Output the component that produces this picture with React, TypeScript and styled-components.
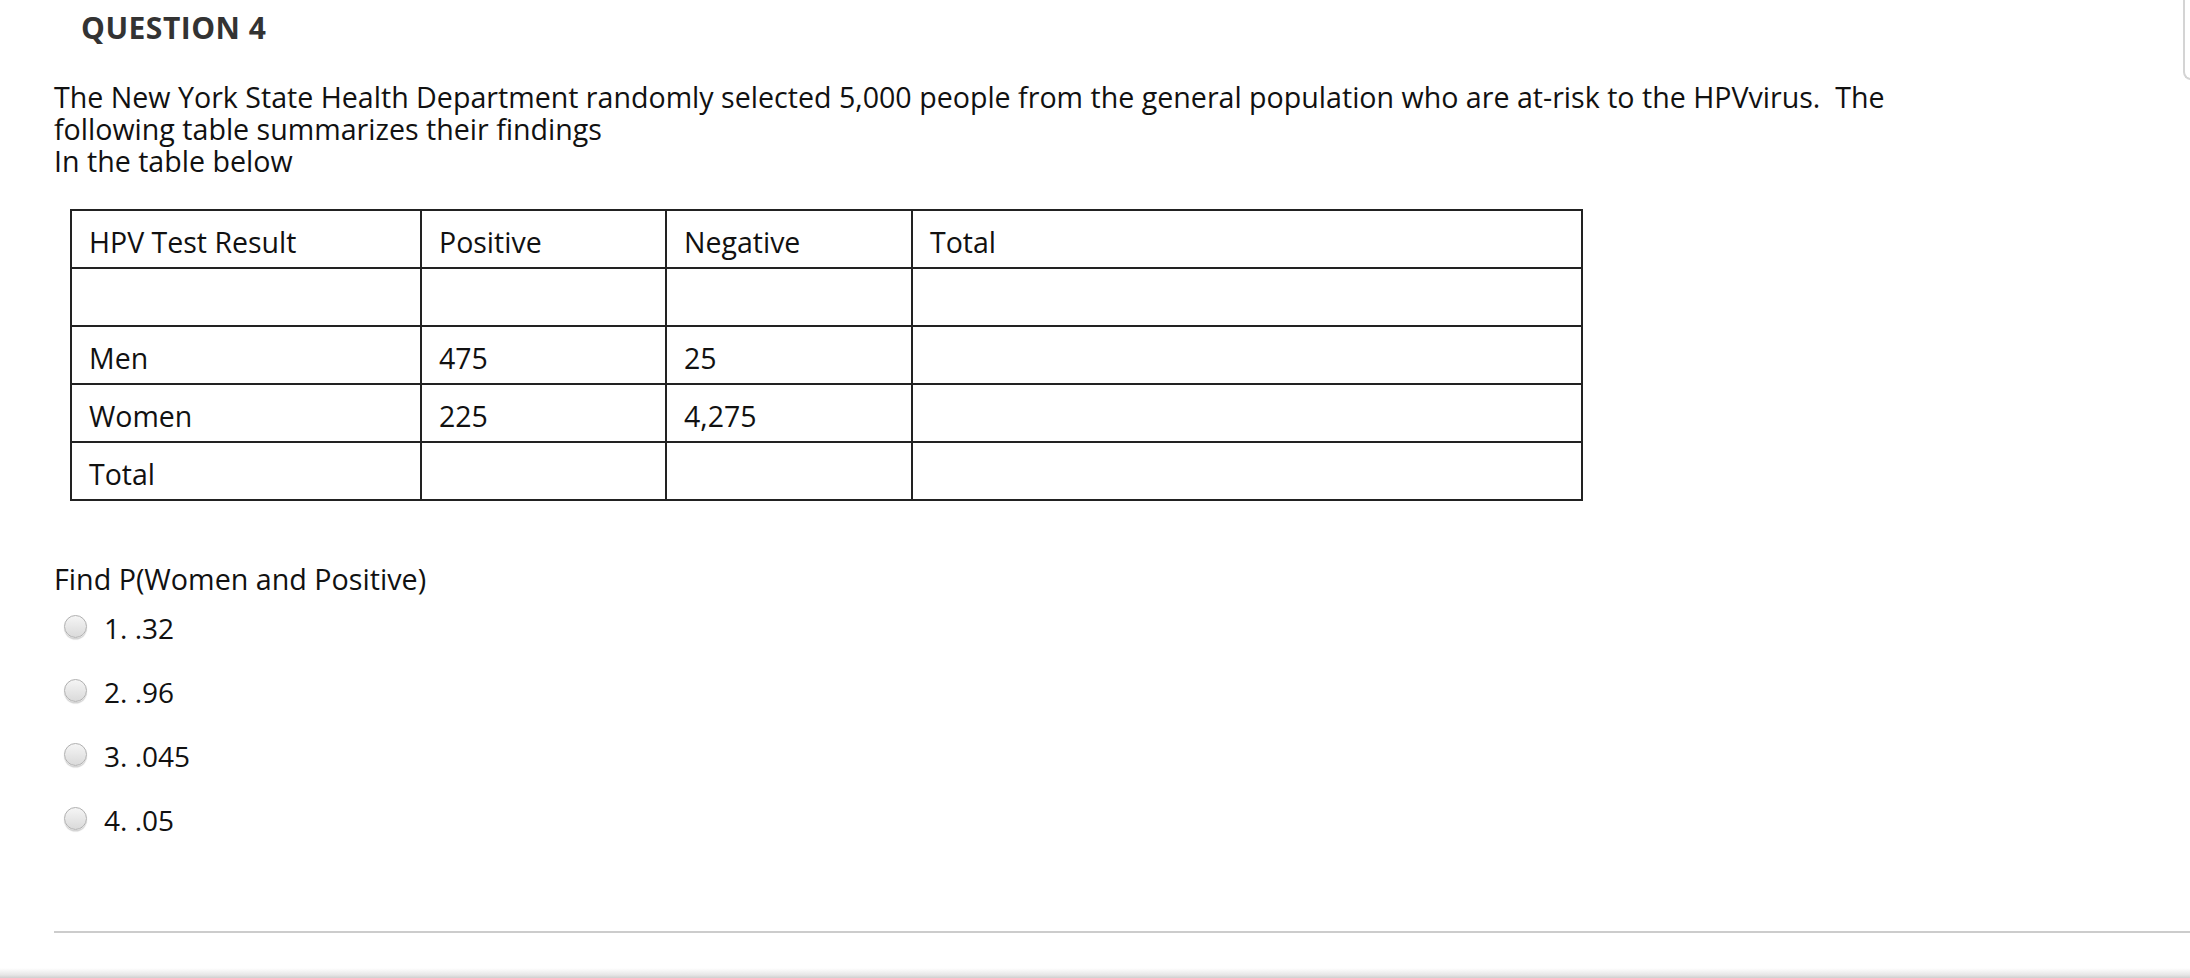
import React from "react";
import styled, { createGlobalStyle } from "styled-components";

const Global = createGlobalStyle`
  html, body { margin: 0; padding: 0; background: #fff; }
  body { font-family: "Open Sans", "Liberation Sans", sans-serif; color: #111; }
`;

const Page = styled.div`
  width: 2190px;
  height: 978px;
  position: relative;
  overflow: hidden;
  display: flex;
  flex-direction: column;
`;

const Header = styled.div`
  display: flex;
  justify-content: space-between;
  align-items: flex-start;
  height: 55px;
`;

const Title = styled.h2`
  margin: 0;
  padding: 9px 0 0 81px;
  font-size: 30px;
  line-height: 38px;
  letter-spacing: 0.5px;
  font-weight: 700;
  color: #333;
`;

const PointsBox = styled.div`
  width: 8px;
  height: 80px;
  border-left: 2px solid #d4d4d4;
  border-bottom: 2px solid #d4d4d4;
  border-bottom-left-radius: 8px;
  box-sizing: border-box;
  margin-right: -1px;
`;

const Content = styled.div`
  padding-left: 54px;
  display: flex;
  flex-direction: column;
`;

const Paragraph = styled.div`
  font-size: 28.6px;
  line-height: 32px;
  color: #111;
  padding-top: 26px;
`;

const Line = styled.div`
  white-space: pre;
`;

const Table = styled.table`
  margin: 32px 0 0 16px;
  width: 1511px;
  border-collapse: collapse;
  table-layout: fixed;
  font-size: 28.5px;
  color: #111;
`;

const Cell = styled.td`
  border: 2px solid #222;
  height: 58px;
  padding: 6px 0 0 17px;
  box-sizing: border-box;
  vertical-align: middle;
  white-space: nowrap;
`;

const Prompt = styled.div`
  font-size: 28.7px;
  line-height: 32px;
  margin-top: 62px;
`;

const Options = styled.div`
  display: flex;
  flex-direction: column;
  gap: 26px;
  margin-top: 14px;
  padding-left: 10px;
`;

const Option = styled.label`
  display: flex;
  align-items: center;
  gap: 17px;
  font-size: 28px;
  line-height: 38px;
`;

const Radio = styled.span`
  width: 23px;
  height: 23px;
  border-radius: 50%;
  box-sizing: border-box;
  border: 1.5px solid #b0b0b0;
  background: linear-gradient(#f5f5f5, #dadada);
  box-shadow: 0 1.5px 1px rgba(0, 0, 0, 0.18);
  flex-shrink: 0;
  margin-top: -3px;
`;

const Divider = styled.div`
  margin: auto 0 0 54px;
  border-top: 2px solid #cccccc;
`;

const BottomShade = styled.div`
  margin-top: 35px;
  height: 10px;
  background: linear-gradient(#ffffff, #e6e6e6 70%, #cfcfcf);
`;

const rows = [
  ["HPV Test Result", "Positive", "Negative", "Total"],
  ["", "", "", ""],
  ["Men", "475", "25", ""],
  ["Women", "225", "4,275", ""],
  ["Total", "", "", ""],
];

const options = ["1. .32", "2. .96", "3. .045", "4. .05"];

export default function App() {
  return (
    <>
      <Global />
      <Page>
        <Header>
          <Title>QUESTION 4</Title>
          <PointsBox />
        </Header>
        <Content>
          <Paragraph>
            <Line>
              The New York State Health Department randomly selected 5,000 people from the general population who are at-risk to the HPVvirus.{"  "}The
            </Line>
            <Line>following table summarizes their findings</Line>
            <Line>In the table below</Line>
          </Paragraph>
          <Table>
            <colgroup>
              <col style={{ width: 350 }} />
              <col style={{ width: 245 }} />
              <col style={{ width: 246 }} />
              <col style={{ width: 670 }} />
            </colgroup>
            <tbody>
              {rows.map((r, i) => (
                <tr key={i}>
                  {r.map((c, j) => (
                    <Cell key={j}>{c}</Cell>
                  ))}
                </tr>
              ))}
            </tbody>
          </Table>
          <Prompt>Find P(Women and Positive)</Prompt>
          <Options>
            {options.map((o) => (
              <Option key={o}>
                <Radio />
                {o}
              </Option>
            ))}
          </Options>
        </Content>
        <Divider />
        <BottomShade />
      </Page>
    </>
  );
}
